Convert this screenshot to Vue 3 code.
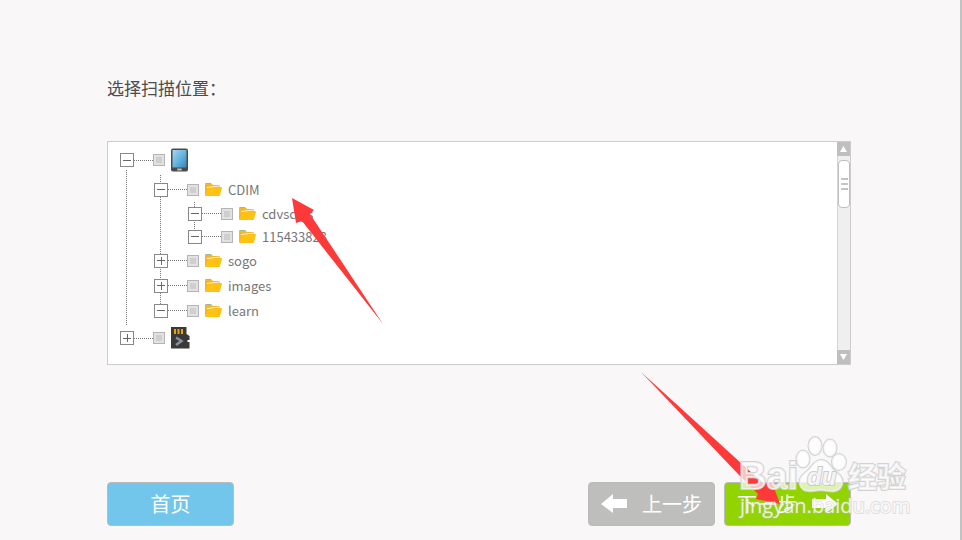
<script setup>
import { ref } from 'vue'

// One entry per line of the tree, folders keep their own children
const phone = ref({
  open: true,
  checked: false,
  folders: [
    {
      name: 'CDIM',
      open: true,
      checked: false,
      files: [
        { name: 'cdvscfgs', open: true, checked: false },
        { name: '115433823', open: true, checked: false }
      ]
    },
    { name: 'sogo', open: false, checked: false },
    { name: 'images', open: false, checked: false },
    { name: 'learn', open: true, checked: false }
  ]
})
const card = ref({ open: false, checked: false })

const toggle = (node) => {
  node.open = !node.open
}
</script>

<template>
  <main class="page">
    <h1 class="title">选择扫描位置：</h1>

    <section class="panel">
      <ul class="tree root">
        <li>
          <div class="row device">
            <button class="toggle" :class="{ closed: !phone.open }" aria-label="手机" @click="toggle(phone)"></button>
            <span class="link"></span>
            <input type="checkbox" class="check" aria-label="手机" v-model="phone.checked">
            <svg class="device-icon" width="20" height="24" viewBox="0 0 20 24">
              <defs>
                <linearGradient id="glass" x1="0" y1="0" x2="1" y2="1">
                  <stop offset="0" stop-color="#a5d5ef" />
                  <stop offset="0.5" stop-color="#68b5df" />
                  <stop offset="1" stop-color="#3187bd" />
                </linearGradient>
              </defs>
              <rect x="0" y="0.5" width="17" height="23" rx="2" fill="#4a4a4c" />
              <rect x="1.5" y="2" width="14" height="17.5" fill="url(#glass)" />
              <rect x="6" y="20.5" width="5" height="2" rx="1" fill="#bbb" />
            </svg>
          </div>

          <ul v-if="phone.open" class="tree folders">
            <li v-for="folder in phone.folders" :key="folder.name">
              <div class="row">
                <button class="toggle" :class="{ closed: !folder.open }" :aria-label="folder.name" @click="toggle(folder)"></button>
                <span class="link"></span>
                <label class="item">
                  <input type="checkbox" class="check" v-model="folder.checked">
                  <svg class="folder-icon" width="17" height="15" viewBox="0 0 17 15">
                    <path d="M0 13V2q0-1 1-1h5l2 2h6q1 0 1 1v9z" fill="#f3b727" />
                    <path d="M1 1.5h5" stroke="#9dbb8c" />
                    <path d="M2 5.5l13-1.5" stroke="#fff3cf" />
                    <path d="M3 6.5l13-1.5q1 0 1 1l-2 7q0 1-1 1H1q-1 0-1-1z" fill="#ffc112" />
                  </svg>
                  <span class="name">{{ folder.name }}</span>
                </label>
              </div>

              <ul v-if="folder.files && folder.open" class="tree">
                <li v-for="file in folder.files" :key="file.name">
                  <div class="row small">
                    <button class="toggle" :class="{ closed: !file.open }" :aria-label="file.name" @click="toggle(file)"></button>
                    <span class="link"></span>
                    <label class="item">
                      <input type="checkbox" class="check" v-model="file.checked">
                      <svg class="folder-icon" width="17" height="15" viewBox="0 0 17 15">
                        <path d="M0 13V2q0-1 1-1h5l2 2h6q1 0 1 1v9z" fill="#f3b727" />
                        <path d="M1 1.5h5" stroke="#9dbb8c" />
                        <path d="M2 5.5l13-1.5" stroke="#fff3cf" />
                        <path d="M3 6.5l13-1.5q1 0 1 1l-2 7q0 1-1 1H1q-1 0-1-1z" fill="#ffc112" />
                      </svg>
                      <span class="name">{{ file.name }}</span>
                    </label>
                  </div>
                </li>
              </ul>
            </li>
          </ul>
        </li>

        <li>
          <div class="row device">
            <button class="toggle" :class="{ closed: !card.open }" aria-label="SD" @click="toggle(card)"></button>
            <span class="link"></span>
            <input type="checkbox" class="check" aria-label="SD" v-model="card.checked">
            <svg class="device-icon" width="20" height="24" viewBox="0 0 20 24">
              <path d="M0 1h15.5v7l3 2v4h-2v2h2v6.5H0z" fill="#3a3938" />
              <path d="M4 3v5M7.5 3v5M11 3v5" stroke="#e9a400" stroke-width="2" />
              <path d="M5 11.5l5.500 3.500-5.500 4" fill="none" stroke="#8791a0" stroke-width="2.5" />
            </svg>
          </div>
        </li>
      </ul>

      <!-- Scroll bar -->
      <div class="scroll">
        <button class="step" aria-label="向上">
          <svg width="7" height="6" viewBox="0 0 7 6"><path d="M3.5 0L7 6H0z" fill="#fff" /></svg>
        </button>
        <div class="track">
          <div class="thumb"><i></i><i></i><i></i></div>
        </div>
        <button class="step" aria-label="向下">
          <svg width="7" height="6" viewBox="0 0 7 6"><path d="M0 0h7L3.5 6z" fill="#fff" /></svg>
        </button>
      </div>
    </section>

    <nav class="actions">
      <button class="btn home">首页</button>
      <button class="btn prev">
        <svg width="26" height="20" viewBox="0 0 26 20"><path d="M0 10L12 0v5h14v9H12v5z" fill="#fff" /></svg>
        上一步
      </button>
      <button class="btn next">
        下一步
        <svg width="26" height="20" viewBox="0 0 26 20"><path d="M26 10L14 0v5H0v9h14v5z" fill="#fff" /></svg>
      </button>
    </nav>

    <!-- Red pointers -->
    <svg class="pointer to-folder" width="92" height="128" viewBox="0 0 92 128">
      <path d="M0 0L22 12 18 16 91 126 10 23 4 25z" fill="#fd3a39" />
    </svg>
    <svg class="pointer to-next" width="142" height="134" viewBox="0 0 142 134">
      <path d="M2 1L125 113 133 111 141 133 117 128 119 123 100 104z" fill="#fd3a39" />
    </svg>

    <!-- Watermark -->
    <svg class="mark" width="176" height="92" viewBox="0 0 176 92">
      <g class="logo">
        <ellipse cx="66" cy="29" rx="6.5" ry="8.5" />
        <ellipse cx="78" cy="16" rx="6.5" ry="9" />
        <ellipse cx="93" cy="18" rx="6.5" ry="8.5" />
        <ellipse cx="102" cy="32" rx="7" ry="8" />
        <path d="M84 30c8 0 9 7 14 11 6 4 9 9 7 14-3 7-9 7-14 6-5-1-9-1-14 0-6 1-12 0-14-6-2-6 2-10 7-14 5-4 7-11 14-11z" />
        <text x="2" y="59" class="latin">Bai</text>
        <text x="111" y="58" class="han">经验</text>
      </g>
      <text x="70" y="55" class="du">du</text>
      <text x="3" y="83" class="site">jingyan.baidu.com</text>
    </svg>
  </main>
</template>

<style>
body {
  margin: 0;
  background: #f9f7f8;
}
</style>

<style scoped>
.page {
  position: relative;
  box-sizing: border-box;
  min-height: 100vh;
  padding: 75px 109px 14px 107px;
  border-right: 2px solid #c2c2c2;
  overflow: hidden;
  display: flex;
  flex-direction: column;
  font-family: "Noto Sans CJK SC", sans-serif;
}
button {
  padding: 0;
  font-family: inherit;
  cursor: pointer;
}
.title {
  margin: 0 0 41px;
  font-size: 17px;
  line-height: 25px;
  font-weight: 400;
  color: #4c4c4c;
}

/* Tree */
.panel {
  display: flex;
  justify-content: space-between;
  border: 1px solid #ccc;
  background: #fff;
}
.tree {
  margin: 0;
  padding: 0;
  list-style: none;
  background: repeating-linear-gradient(#777 0 1px, #fff 1px 2px) 6px 0 / 1px calc(100% - 15px) no-repeat;
}
.tree .tree {
  margin-left: 34px;
}
.root {
  margin: 3px 0 11px 12px;
  background-position: 6px 25px;
  background-size: 1px calc(100% - 52px);
}
.folders {
  padding-top: 2px;
}
.row {
  display: flex;
  align-items: center;
  height: 25px;
}
.row.small {
  height: 23px;
}
.row.device {
  height: 30px;
}
.toggle {
  width: 14px;
  height: 14px;
  border: 1px solid #888;
  background: linear-gradient(#666, #666) center / 8px 1px no-repeat #fff;
}
.toggle.closed {
  background: linear-gradient(#666, #666) center / 8px 1px no-repeat,
    linear-gradient(#666, #666) center / 1px 8px no-repeat #fff;
}
.link {
  width: 19px;
  height: 1px;
  background: repeating-linear-gradient(90deg, #777 0 1px, #fff 1px 2px);
}
.item {
  display: flex;
  align-items: center;
}
.check {
  appearance: none;
  width: 12px;
  height: 12px;
  margin: 0 6px 0 0;
  border: 1px solid #b4b4b4;
  background: #cfcfcf;
  box-shadow: inset 0 0 0 2px #e2e2e2;
}
.check:checked {
  background: #555;
}
.folder-icon {
  margin-right: 6px;
}
.name {
  font-size: 13px;
  line-height: 20px;
  color: #777;
}

/* Scroll bar */
.scroll {
  display: flex;
  flex-direction: column;
  width: 13px;
  background: #efefef;
}
.step {
  display: flex;
  align-items: center;
  justify-content: center;
  height: 14px;
  border: 0;
  background: #bfbfbf;
}
.track {
  flex: 1;
  padding-top: 4px;
  border-left: 1px solid #d5d5d5;
}
.thumb {
  display: flex;
  flex-direction: column;
  align-items: center;
  justify-content: center;
  gap: 3px;
  box-sizing: border-box;
  height: 48px;
  border: 1px solid #bfbfbf;
  border-radius: 4px;
  background: #fff;
}
.thumb i {
  width: 7px;
  height: 2px;
  background: #c4c4c4;
}

/* Buttons */
.actions {
  display: flex;
  gap: 9px;
  margin-top: auto;
}
.btn {
  display: flex;
  align-items: center;
  justify-content: center;
  gap: 15px;
  box-sizing: border-box;
  width: 127px;
  height: 44px;
  border: 1px solid #bbb;
  border-radius: 4px;
  font-size: 20px;
  line-height: 30px;
  color: #fff;
}
.home {
  margin-right: auto;
  background: #72c6eb;
}
.prev {
  background: #bebebc;
}
.next {
  background: #91d400;
}

/* Overlays */
.pointer,
.mark {
  position: absolute;
  pointer-events: none;
}
.to-folder {
  left: 292px;
  top: 198px;
}
.to-next {
  right: 179px;
  bottom: 35px;
}
.mark {
  right: 47px;
  bottom: 18px;
}
.logo {
  fill: #fff;
  fill-opacity: 0.7;
  stroke: #d2d2d2;
  stroke-width: 2px;
  paint-order: stroke;
}
.latin {
  font: bold 38px "Liberation Sans", sans-serif;
}
.han {
  font: bold 29px "Noto Sans CJK SC", sans-serif;
}
.du {
  font: italic bold 24px "Liberation Sans", sans-serif;
  fill: #f4f4f4;
  stroke: #ccc;
  stroke-width: 2px;
  paint-order: stroke;
}
.site {
  font: 20px "Open Sans", sans-serif;
  fill: #fff;
  fill-opacity: 0.8;
  stroke: #bbb;
  stroke-width: 2px;
  stroke-opacity: 0.4;
  paint-order: stroke;
}
</style>
